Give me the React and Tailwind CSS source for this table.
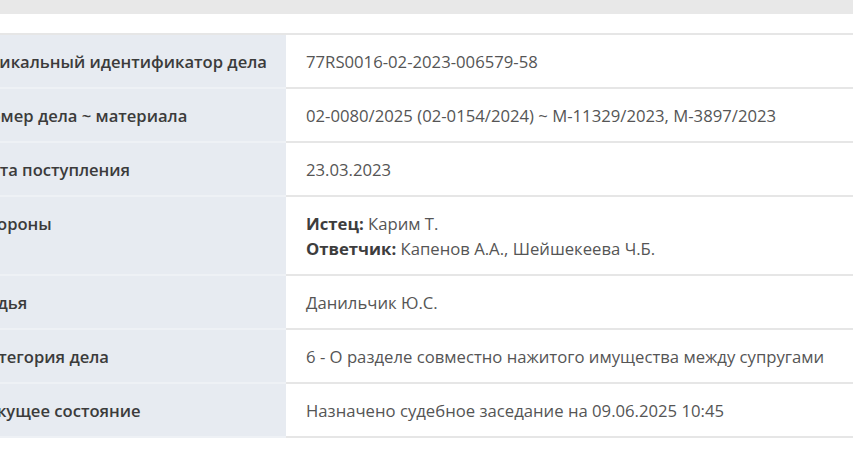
import React from 'react';

const rows = [
    { label: 'Уникальный идентификатор дела', value: '77RS0016-02-2023-006579-58' },
    { label: 'Номер дела ~ материала', value: '02-0080/2025 (02-0154/2024) ~ М-11329/2023, М-3897/2023' },
    { label: 'Дата поступления', value: '23.03.2023' },
    {
        label: 'Стороны',
        value: (
            <>
                <div><span className="font-bold text-[#3d3d3d]">Истец:</span> Карим Т.</div>
                <div><span className="font-bold text-[#3d3d3d]">Ответчик:</span> Капенов А.А., Шейшекеева Ч.Б.</div>
            </>
        ),
    },
    { label: 'Судья', value: 'Данильчик Ю.С.' },
    { label: 'Категория дела', value: '6 - О разделе совместно нажитого имущества между супругами' },
    { label: 'Текущее состояние', value: 'Назначено судебное заседание на 09.06.2025 10:45' },
];

const App = () => {
    return (
        <div className="w-[853px] h-[475px] bg-white overflow-hidden" style={{ fontFamily: '"Open Sans", "Noto Sans", sans-serif' }}>
            <div className="h-[14px] bg-[#e8e8e8]" />
            <div className="mt-[19px] border-t-2 border-[#e6e6e6]">
                <div className="ml-[-42px]">
                    {rows.map((row) => (
                        <div key={row.label} className="flex">
                            <div className="w-[328px] shrink-0 bg-[#e7ebf1] border-b-2 border-[#eef1f5] pl-5 pt-[14px] pb-[13px] text-[16.6px] leading-[25px] font-semibold text-[#3b3b3b] whitespace-nowrap">
                                {row.label}
                            </div>
                            <div className="flex-1 border-b-2 border-[#e6e6e6] pl-5 pt-[14px] pb-[13px] text-[16.7px] leading-[25px] text-[#555555] whitespace-nowrap">
                                {row.value}
                            </div>
                        </div>
                    ))}
                </div>
            </div>
        </div>
    );
};

export default App;
